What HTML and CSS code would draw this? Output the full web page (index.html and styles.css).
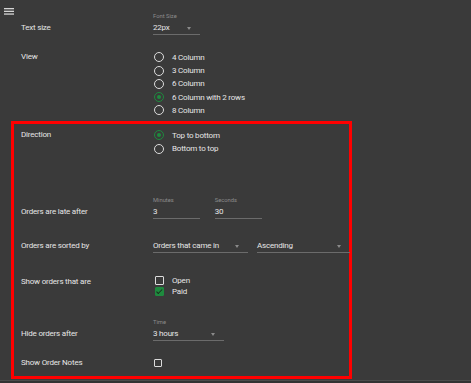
FILE: index.html
```html
<!DOCTYPE html>
<html lang="en">
<head>
    <meta charset="UTF-8">
    <title>Settings</title>
    <link rel="stylesheet" href="styles.css">
</head>
<body>
    <div class="topbar">
        <svg class="menu-icon" width="10" height="7" viewBox="0 0 10 7">
            <rect x="0" y="0" width="10" height="1.3" fill="#d6d6d6"/>
            <rect x="0" y="2.7" width="10" height="1.3" fill="#d6d6d6"/>
            <rect x="0" y="5.4" width="10" height="1.3" fill="#d6d6d6"/>
        </svg>
    </div>

    <div class="settings">
        <div class="row row-text-size">
            <div class="row-label with-caption">Text size</div>
            <div class="controls">
                <div class="field w-47">
                    <div class="field-caption">Font Size</div>
                    <div class="field-value select">22px</div>
                </div>
            </div>
        </div>

        <div class="row row-view">
            <div class="row-label radio-label">View</div>
            <div class="options">
                <div class="radio"><span class="radio-dot"></span>4 Column</div>
                <div class="radio"><span class="radio-dot"></span>3 Column</div>
                <div class="radio"><span class="radio-dot"></span>6 Column</div>
                <div class="radio checked"><span class="radio-dot"></span>6 Column with 2 rows</div>
                <div class="radio"><span class="radio-dot"></span>8 Column</div>
            </div>
        </div>

        <div class="highlight">
            <div class="row row-direction">
                <div class="row-label radio-label">Direction</div>
                <div class="options">
                    <div class="radio checked"><span class="radio-dot"></span>Top to bottom</div>
                    <div class="radio"><span class="radio-dot"></span>Bottom to top</div>
                </div>
            </div>

            <div class="row row-late">
                <div class="row-label with-caption">Orders are late after</div>
                <div class="controls">
                    <div class="field w-47">
                        <div class="field-caption">Minutes</div>
                        <div class="field-value">3</div>
                    </div>
                    <div class="field w-47">
                        <div class="field-caption">Seconds</div>
                        <div class="field-value">30</div>
                    </div>
                </div>
            </div>

            <div class="row row-sorted">
                <div class="row-label">Orders are sorted by</div>
                <div class="controls gap-10">
                    <div class="field w-95">
                        <div class="field-value select">Orders that came in</div>
                    </div>
                    <div class="field w-93">
                        <div class="field-value select">Ascending</div>
                    </div>
                </div>
            </div>

            <div class="row row-show">
                <div class="row-label check-label">Show orders that are</div>
                <div class="options">
                    <div class="checkbox"><span class="box"></span>Open</div>
                    <div class="checkbox checked"><span class="box"></span>Paid</div>
                </div>
            </div>

            <div class="row row-hide">
                <div class="row-label with-caption">Hide orders after</div>
                <div class="controls">
                    <div class="field w-71">
                        <div class="field-caption">Time</div>
                        <div class="field-value select">3 hours</div>
                    </div>
                </div>
            </div>

            <div class="row row-notes">
                <div class="row-label notes-label">Show Order Notes</div>
                <div class="options">
                    <div class="checkbox flush"><span class="box"></span></div>
                </div>
            </div>
        </div>
    </div>

    <div class="footer-edge"></div>
</body>
</html>
```

FILE: styles.css
```css
:root {
    --bg-color: #3a3a3a;
    --text-color: #e6e6e6;
    --caption-color: #8c8c8c;
    --line-color: #6b6b6b;
    --green: #1e8a3e;
    --red: #ff0000;
}

* {
    margin: 0;
    padding: 0;
    box-sizing: border-box;
}

html,
body {
    height: 100%;
}

body {
    font-family: Roboto, 'Liberation Sans', sans-serif;
    font-size: 8px;
    letter-spacing: -0.2px;
    color: var(--text-color);
    background-color: var(--bg-color);
    overflow: hidden;
    position: relative;
}

.topbar {
    height: 12px;
    padding: 8px 0 0 4px;
}

.menu-icon {
    display: block;
}

.settings {
    padding-left: 11px;
}

/* Rows: label column + control column */
.row {
    display: grid;
    grid-template-columns: 132px 1fr;
    padding-left: 10px;
}

.highlight {
    width: 341px;
    border: 3px solid var(--red);
    margin-top: 4px;
    padding-bottom: 7.5px;
}

.highlight .row {
    padding-left: 7px;
}

.row-label {
    line-height: 13px;
    white-space: nowrap;
}

.row-label.with-caption {
    padding-top: 9px;
}

.row-label.radio-label {
    line-height: 11px;
}

.row-label.check-label {
    line-height: 14px;
}

.row-label.notes-label {
    line-height: 11px;
}

.row-view { margin-top: 15.7px; }
.row-direction { margin-top: 4.7px; }
.row-late { margin-top: 41px; }
.row-sorted { margin-top: 20px; }
.row-show { margin-top: 21.6px; }
.row-hide { margin-top: 21.4px; }
.row-notes { margin-top: 16.3px; }

/* Text fields and selects */
.controls {
    display: flex;
    gap: 14.7px;
}

.controls.gap-10 {
    gap: 9.5px;
}

.field {
    display: flex;
    flex-direction: column;
}

.w-47 { width: 47px; }
.w-71 { width: 71px; }
.w-93 { width: 93px; }
.w-95 { width: 94.5px; }

.field-caption {
    font-size: 5.8px;
    letter-spacing: 0;
    line-height: 9px;
    color: var(--caption-color);
}

.field-value {
    position: relative;
    line-height: 13px;
    border-bottom: 1px solid var(--line-color);
    white-space: nowrap;
}

.field-value.select:after {
    content: "";
    position: absolute;
    right: 9px;
    top: 5.5px;
    border-left: 2.5px solid transparent;
    border-right: 2.5px solid transparent;
    border-top: 3px solid #8a8a8a;
}

/* Radio buttons */
.options {
    display: flex;
    flex-direction: column;
}

.radio {
    display: flex;
    align-items: center;
    height: 13.25px;
    white-space: nowrap;
}

.radio-dot {
    width: 10px;
    height: 10px;
    margin: 0 8px 0 1px;
    border: 1.5px solid #dcdcdc;
    border-radius: 50%;
    display: flex;
    align-items: center;
    justify-content: center;
}

.radio.checked .radio-dot {
    border-color: var(--green);
}

.radio.checked .radio-dot:before {
    content: "";
    width: 4px;
    height: 4px;
    border-radius: 50%;
    background-color: var(--green);
}

/* Checkboxes */
.checkbox {
    display: flex;
    align-items: center;
    height: 11px;
    white-space: nowrap;
}

.checkbox .box {
    width: 9px;
    height: 9px;
    margin: 0 8px 0 2px;
    border: 1.5px solid #dcdcdc;
    border-radius: 1px;
    position: relative;
}

.checkbox.flush .box {
    margin-left: 0.5px;
    width: 8.5px;
    height: 8.5px;
}

.checkbox.checked .box {
    background-color: var(--green);
    border-color: var(--green);
}

.checkbox.checked .box:after {
    content: "";
    position: absolute;
    left: 1.8px;
    top: 0;
    width: 2px;
    height: 4.5px;
    border-right: 1.2px solid #1a2a1d;
    border-bottom: 1.2px solid #1a2a1d;
    transform: rotate(45deg);
}

.footer-edge {
    position: absolute;
    left: 0;
    right: 0;
    bottom: 0;
    height: 3px;
    border-top: 1px solid #4c4c4c;
    background-color: #333;
}
```
